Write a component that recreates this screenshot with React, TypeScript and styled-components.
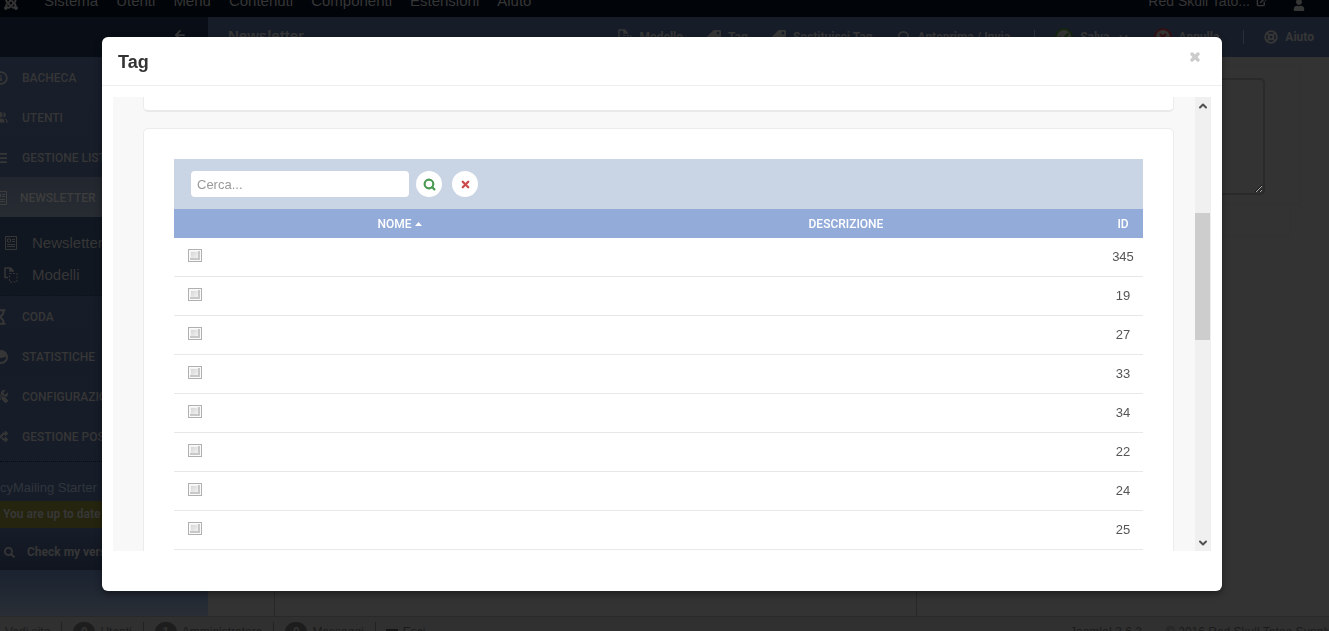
import React from "react";
import styled, { createGlobalStyle, css } from "styled-components";
import { FaJoomla, FaUser, FaTag, FaSearch, FaRandom, FaTools } from "react-icons/fa";
import {
  ArrowLeft,
  Check,
  ChevronDown,
  ChevronUp,
  ExternalLink,
  Hourglass,
  Info,
  LifeBuoy,
  List,
  Search,
  Users,
  X,
} from "lucide-react";

const sans = `"Liberation Sans", Arial, sans-serif`;
const condensed = `Roboto, "Liberation Sans", sans-serif`;

const GlobalStyle = createGlobalStyle`
  * { box-sizing: border-box; }
  body {
    margin: 0;
    font: 13px/18px ${sans};
    color: #555;
    background: #333;
  }
  button { font: inherit; color: inherit; background: none; border: 0; padding: 0; }
  a { color: inherit; text-decoration: none; }
  svg { flex: none; }
`;

const Page = styled.div`
  display: flex;
  flex-direction: column;
  height: 100vh;
  overflow: hidden;
  color: #363636;
`;

const TopBar = styled.header`
  display: flex;
  align-items: flex-end;
  flex: none;
  height: 17px;
  padding: 0 24px 6px 3px;
  overflow: hidden;
  background: #010409;
  font-size: 15px;
  line-height: 20px;
`;

const TopMenu = styled.nav`
  display: flex;
  flex: 1;
  gap: 18px;
  margin-left: 25px;
`;

const Account = styled.div`
  display: flex;
  align-items: center;
  gap: 6px;
  margin-right: 26px;
  font-size: 14px;
`;

const TitleBar = styled.div`
  display: flex;
  flex: none;
  height: 40px;
  background: #171d28;
  font: bold 12px/16px ${condensed};
`;

const CollapseArea = styled.div`
  display: flex;
  align-items: center;
  justify-content: flex-end;
  flex: none;
  width: 208px;
  padding: 0 21px 5px 0;
  background: #090e16;
`;

const PageTitle = styled.h1`
  flex: 1;
  margin: 0;
  padding: 0 20px;
  font: bold 15px/38px ${sans};
`;

const Tools = styled.div`
  display: flex;
  align-items: center;
  padding-right: 3px;
`;

const Tool = styled.button`
  display: flex;
  align-items: center;
  gap: 7px;
  padding: 0 12px;
`;

const Divider = styled.span`
  width: 1px;
  height: 14px;
  margin: 0 8px 0 12px;
  background: #2a2f38;
`;

const RoundIcon = styled.span<{ $color: string }>`
  display: flex;
  align-items: center;
  justify-content: center;
  width: 18px;
  height: 18px;
  border: 2px solid ${(p) => p.$color};
  border-radius: 50%;
  color: ${(p) => p.$color};
  background: #333;
`;

const TagIcon = styled(FaTag)`
  transform: scaleX(-1);
`;

const Columns = styled.div`
  display: flex;
  flex: 1;
  min-height: 0;
`;

const Sidebar = styled.aside`
  flex: none;
  width: 208px;
  overflow: hidden;
  background: linear-gradient(#181e2a 0, #161c27 300px, #161d29 480px, #1c2431 520px, #2a2f36 560px);
`;

const NavItem = styled.a<{ $active?: boolean }>`
  display: flex;
  align-items: center;
  gap: 14px;
  height: 40px;
  padding-top: 1px;
  font: 500 12px/16px ${condensed};
  white-space: nowrap;
  ${(p) =>
    p.$active &&
    css`
      gap: 12px;
      color: #3d3d3d;
      background: linear-gradient(#22272f, #272b32);
    `}
`;

const ClippedIcon = styled.span`
  display: flex;
  justify-content: flex-end;
  width: 8px;
  overflow: hidden;
`;

const SubMenu = styled.div`
  padding: 10px 0 4px 4px;
  border-bottom: 1px dashed #0d121b;
  background: #111721;
  font-size: 15px;
`;

const SubItem = styled.a`
  display: flex;
  align-items: center;
  gap: 14px;
  height: 32px;
`;

const Version = styled.div`
  margin-top: 5px;
  padding: 17px 0 4px;
  border-top: 1px dotted #080c12;
  line-height: 18px;
  white-space: nowrap;
  color: #31353c;
`;

const UpToDate = styled.div`
  padding-left: 3px;
  background: #25240e;
  font: bold 12px/27px ${condensed};
`;

const CheckButton = styled.button`
  display: flex;
  align-items: center;
  gap: 12px;
  width: 100%;
  height: 36px;
  margin-top: 6px;
  padding-left: 4px;
  background: linear-gradient(#161c27, #101520);
  font: bold 12px/16px ${condensed};
`;

const Main = styled.main`
  display: flex;
  flex: 1;
  flex-direction: column;
  padding: 8px 28px 0 66px;
`;

const Panel = styled.section`
  padding: 12px 35px 9px;
  border: 1px solid #313131;
  border-radius: 4px;
`;

const Notes = styled.textarea`
  display: block;
  width: 100%;
  height: 117px;
  border: 2px solid #2a2a2a;
  border-radius: 5px;
  background: #333;
`;

const LowerPanel = styled.section`
  height: 32px;
  margin-right: 10px;
  border: 1px solid #313131;
  border-top: 0;
`;

const EditorFrame = styled.section`
  flex: 1;
  max-width: 643px;
  border: solid #282828;
  border-width: 0 1px;
`;

const StatusBar = styled.footer`
  display: flex;
  flex: none;
  height: 15px;
  padding: 5px 0 0 5px;
  overflow: hidden;
  border-top: 1px solid #292929;
  background: #303030;
  color: #1b1b1b;
  font-size: 12px;
  line-height: 20px;
  white-space: nowrap;
`;

const StatusItem = styled.a`
  display: flex;
  align-items: center;
  gap: 5px;
  height: 20px;
  margin-right: 10px;
  padding-right: 11px;
  border-right: 1px solid #222;

  &:last-of-type { border: 0; }
`;

const Badge = styled.span`
  width: 22px;
  margin-left: 1px;
  border-radius: 10px;
  background: #1d1d1d;
  color: #333;
  font-weight: bold;
  text-align: center;
`;

const LogoutMark = styled.span`
  width: 12px;
  height: 6px;
  background: #161616;
`;

const Credits = styled.div`
  display: flex;
  gap: 24px;
  width: 259px;
  margin-left: auto;
`;

const Dialog = styled.div`
  position: fixed;
  inset: 37px 107px 40px 102px;
  display: flex;
  flex-direction: column;
  border-radius: 6px;
  background: #fff;
  box-shadow: 0 3px 7px rgba(0, 0, 0, 0.4);
`;

const DialogHeader = styled.header`
  display: flex;
  align-items: center;
  justify-content: space-between;
  flex: none;
  height: 49px;
  padding: 1px 21px 0 16px;
  border-bottom: 1px solid #eee;
`;

const DialogTitle = styled.h2`
  margin: 0;
  color: #333;
  font: bold 18px/24px ${sans};
`;

const CloseButton = styled.button`
  display: flex;
  padding-bottom: 9px;
  color: #ccc;
`;

const Frame = styled.div`
  display: flex;
  flex: 1;
  min-height: 0;
  margin: 11px 11px 40px;
  background: #f8f8f8;
`;

const FrameContent = styled.div`
  flex: 1;
  padding: 0 21px 0 30px;
  overflow: hidden;
`;

const Card = styled.section`
  padding: 30px;
  border: 1px solid #ececec;
  border-radius: 5px;
  background: #fff;
`;

const PreviousCard = styled(Card)`
  height: 15px;
  margin-bottom: 16px;
  padding: 0;
  border-top: 0;
  border-bottom: 2px solid #e9e9e9;
  border-radius: 0 0 5px 5px;
`;

const SearchBar = styled.form`
  display: flex;
  align-items: center;
  height: 50px;
  padding-left: 17px;
  background: #c9d4e5;
`;

const SearchInput = styled.input`
  width: 218px;
  height: 26px;
  margin-right: 7px;
  padding: 0 6px;
  border: 0;
  border-radius: 4px;
  background: #fff;
  font: 13px/18px ${sans};

  &::placeholder { color: #999; opacity: 1; }
`;

const RoundButton = styled.button<{ $color: string }>`
  display: flex;
  align-items: center;
  justify-content: center;
  width: 26px;
  height: 26px;
  margin-right: 10px;
  border-radius: 50%;
  background: #fff;
  color: ${(p) => p.$color};
`;

const TagTable = styled.table`
  width: 100%;
  border-spacing: 0;
  table-layout: fixed;
  text-align: center;
`;

const HeadCell = styled.th<{ $width?: string }>`
  width: ${(p) => p.$width ?? "auto"};
  height: 29px;
  padding: 0;
  background: #93abd9;
  color: #fff;
  font: 500 12px/16px ${condensed};
`;

const SortButton = styled.button`
  display: inline-flex;
  align-items: center;
  gap: 4px;
`;

const Cell = styled.td`
  height: 39px;
  padding: 0;
  border-bottom: 1px solid #e8e8e8;
  color: #555;
`;

const TickBox = styled.input`
  display: block;
  width: 14px;
  height: 13px;
  margin: 0 0 4px 14px;
  padding: 2px;
  appearance: none;
  border: 1px solid #b0b0b0;
  background: linear-gradient(135deg, #d6d6d6, #f6f6f6) content-box, #f4f4f4;
  box-shadow: inset 0 0 0 1px #fafafa, inset -2px -2px 0 1px #c8c8c8;
`;

const ScrollBar = styled.div`
  display: flex;
  flex-direction: column;
  width: 16px;
  background: #f0f0f0;
`;

const ScrollArrow = styled.button`
  display: flex;
  align-items: center;
  justify-content: center;
  height: 17px;
  color: #505050;
`;

const ScrollTrack = styled.div`
  flex: 1;
  padding: 99px 1px 0 0;
`;

const ScrollThumb = styled.div`
  height: 127px;
  background: #cdcdcd;
`;

/* A sheet with a headline block and lines of text. */
function NewsIcon() {
  return (
    <svg width="14" height="14" viewBox="0 0 14 14" fill="none" stroke="currentColor" aria-hidden="true">
      <path d="M1.500 .5h11v13h-11z" />
      <path d="M3.500 3h3v3h-3zM8 3.500h3M8 5.500h3M3 8.500h8M3 10.500h8" />
    </svg>
  );
}

/* A folded page in front of a dashed copy. */
function TemplateIcon() {
  return (
    <svg width="14" height="16" viewBox="0 0 14 16" fill="none" stroke="currentColor" aria-hidden="true">
      <path d="M4 10.500H1V1h5.500L9 3.500V5M6 1v3h3" strokeWidth="1.500" />
      <path d="M5.500 6.500h7.500v8.500H5.500z" strokeDasharray="2 1.500" />
    </svg>
  );
}

/* A disc whose upper half is filled. */
function StatsIcon() {
  return (
    <svg width="14" height="14" viewBox="0 0 14 14" aria-hidden="true">
      <circle cx="7" cy="7" r="6" fill="none" stroke="currentColor" strokeWidth="2" />
      <path d="M1 7a6 6 0 0 1 12-1L8 8z" fill="currentColor" />
    </svg>
  );
}

const topMenu = ["Sistema", "Utenti", "Menu", "Contenuti", "Componenti", "Estensioni", "Aiuto"];

const navBefore = [
  { label: "BACHECA", icon: <Info size={14} strokeWidth={3} /> },
  { label: "UTENTI", icon: <Users size={13} fill="currentColor" /> },
  { label: "GESTIONE LISTE", icon: <List size={14} strokeWidth={3} /> },
];

const navAfter = [
  { label: "CODA", icon: <Hourglass size={16} strokeWidth={3} /> },
  { label: "STATISTICHE", icon: <StatsIcon /> },
  { label: "CONFIGURAZIONE", icon: <FaTools size={13} /> },
  { label: "GESTIONE POSTA", icon: <FaRandom size={13} /> },
];

const tagIds = [345, 19, 27, 33, 34, 22, 24, 25];

function NavLink({ label, icon, active }: { label: string; icon: React.ReactNode; active?: boolean }) {
  return (
    <NavItem href="#" $active={active}>
      <ClippedIcon>{icon}</ClippedIcon>
      {label}
    </NavItem>
  );
}

export default function App() {
  return (
    <>
      <GlobalStyle />
      <Page>
        <TopBar>
          <FaJoomla size={16} />
          <TopMenu>
            {topMenu.map((label) => (
              <a href="#" key={label}>{label}</a>
            ))}
          </TopMenu>
          <Account>
            Red Skull Tato...
            <ExternalLink size={11} strokeWidth={3} />
          </Account>
          <FaUser size={12} />
        </TopBar>
        <TitleBar>
          <CollapseArea>
            <ArrowLeft size={14} strokeWidth={3} />
          </CollapseArea>
          <PageTitle>Newsletter</PageTitle>
          <Tools>
            <Tool><TemplateIcon />Modello</Tool>
            <Tool><TagIcon size={14} />Tag</Tool>
            <Tool><TagIcon size={14} />Sostituisci Tag</Tool>
            <Tool><Search size={14} strokeWidth={3} />Anteprima / Invia</Tool>
            <Divider />
            <Tool>
              <RoundIcon $color="#14260f"><Check size={12} strokeWidth={4} /></RoundIcon>
              Salva
              <ChevronDown size={13} strokeWidth={3} />
            </Tool>
            <Tool>
              <RoundIcon $color="#321013"><X size={10} strokeWidth={5} /></RoundIcon>
              Annulla
            </Tool>
            <Divider />
            <Tool><LifeBuoy size={14} strokeWidth={3} />Aiuto</Tool>
          </Tools>
        </TitleBar>
        <Columns>
          <Sidebar>
            {navBefore.map((item) => (
              <NavLink key={item.label} {...item} />
            ))}
            <NavLink label="NEWSLETTER" icon={<NewsIcon />} active />
            <SubMenu>
              <SubItem href="#"><NewsIcon />Newsletter</SubItem>
              <SubItem href="#"><TemplateIcon />Modelli</SubItem>
            </SubMenu>
            {navAfter.map((item) => (
              <NavLink key={item.label} {...item} />
            ))}
            <Version>cyMailing Starter</Version>
            <UpToDate>You are up to date</UpToDate>
            <CheckButton><FaSearch size={11} />Check my version</CheckButton>
          </Sidebar>
          <Main>
            <Panel>
              <Notes aria-label="Note" />
            </Panel>
            <LowerPanel />
            <EditorFrame />
          </Main>
        </Columns>
        <StatusBar>
          <StatusItem href="#">Vedi sito</StatusItem>
          <StatusItem href="#"><Badge>0</Badge>Utenti</StatusItem>
          <StatusItem href="#"><Badge>1</Badge>Amministratore</StatusItem>
          <StatusItem href="#"><Badge>0</Badge>Messaggi</StatusItem>
          <StatusItem href="#"><LogoutMark />Esci</StatusItem>
          <Credits>
            <span>Joomla! 3.6.2</span>
            <span>© 2016 Red Skull Tatoo Supply</span>
          </Credits>
        </StatusBar>
      </Page>

      <Dialog role="dialog" aria-labelledby="dialog-title">
        <DialogHeader>
          <DialogTitle id="dialog-title">Tag</DialogTitle>
          <CloseButton aria-label="Chiudi">
            <X size={12} strokeWidth={7} />
          </CloseButton>
        </DialogHeader>
        <Frame>
          <FrameContent>
            <PreviousCard />
            <Card>
              <SearchBar>
                <SearchInput type="text" placeholder="Cerca..." aria-label="Cerca" />
                <RoundButton type="button" $color="#4a9a52" aria-label="Cerca">
                  <Search size={13} strokeWidth={4} />
                </RoundButton>
                <RoundButton type="button" $color="#cd4a4a" aria-label="Cancella">
                  <X size={11} strokeWidth={5} />
                </RoundButton>
              </SearchBar>
              <TagTable>
                <thead>
                  <tr>
                    <HeadCell $width="37px" aria-label="Seleziona" />
                    <HeadCell $width="39%">
                      <SortButton>
                        NOME
                        <svg width="7" height="4" viewBox="0 0 7 4" aria-hidden="true">
                          <path d="M0 4 3.500 0 7 4z" fill="#fff" />
                        </svg>
                      </SortButton>
                    </HeadCell>
                    <HeadCell>DESCRIZIONE</HeadCell>
                    <HeadCell $width="40px">ID</HeadCell>
                  </tr>
                </thead>
                <tbody>
                  {tagIds.map((id) => (
                    <tr key={id}>
                      <Cell><TickBox type="checkbox" aria-label={`Tag ${id}`} /></Cell>
                      <Cell />
                      <Cell />
                      <Cell>{id}</Cell>
                    </tr>
                  ))}
                </tbody>
              </TagTable>
            </Card>
          </FrameContent>
          <ScrollBar>
            <ScrollArrow aria-label="Scorri su"><ChevronUp size={12} strokeWidth={4} /></ScrollArrow>
            <ScrollTrack><ScrollThumb /></ScrollTrack>
            <ScrollArrow aria-label="Scorri giù"><ChevronDown size={12} strokeWidth={4} /></ScrollArrow>
          </ScrollBar>
        </Frame>
      </Dialog>
    </>
  );
}
